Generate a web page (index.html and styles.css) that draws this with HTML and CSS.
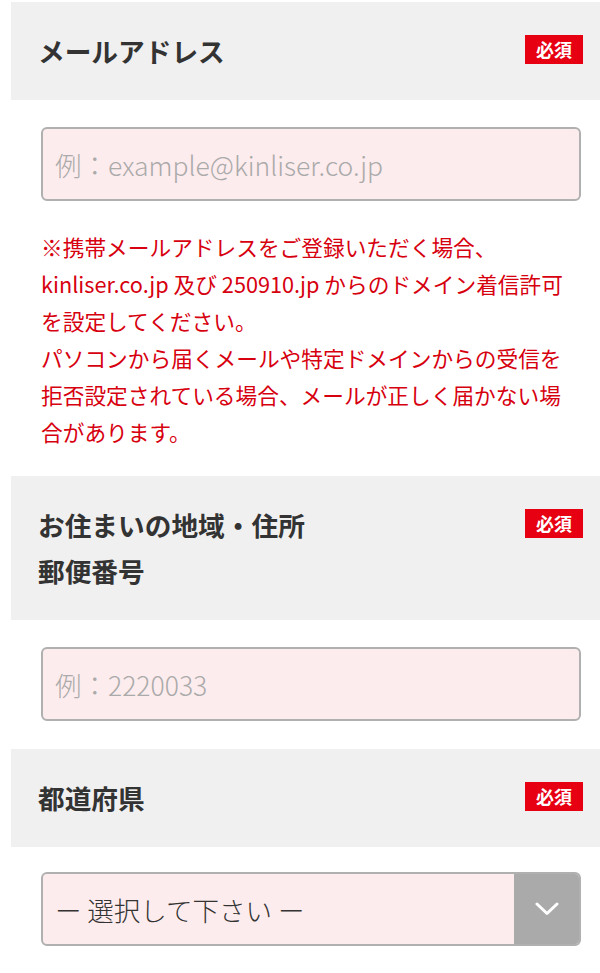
FILE: index.html
```html
<!DOCTYPE html>
<html lang="ja">
<head>
<meta charset="utf-8">
<title>フォーム</title>
<link rel="stylesheet" href="styles.css">
</head>
<body>
<div class="form">
  <div class="sec-head">
    <div class="sec-title">メールアドレス</div>
    <span class="badge">必須</span>
  </div>
  <div class="sec-body">
    <input class="text-input" type="text" placeholder="例：example@kinliser.co.jp">
    <p class="note">※携帯メールアドレスをご登録いただく場合、<br>kinliser.co.jp 及び 250910.jp からのドメイン着信許可を設定してください。<br>パソコンから届くメールや特定ドメインからの受信を拒否設定されている場合、メールが正しく届かない場合があります。</p>
  </div>

  <div class="sec-head">
    <div class="sec-title">お住まいの地域・住所<br>郵便番号</div>
    <span class="badge">必須</span>
  </div>
  <div class="sec-body">
    <input class="text-input" type="text" placeholder="例：2220033">
  </div>

  <div class="sec-head">
    <div class="sec-title">都道府県</div>
    <span class="badge">必須</span>
  </div>
  <div class="sec-body">
    <div class="select-wrap">
      <div class="select-value">ー 選択して下さい ー</div>
      <div class="select-arrow">
        <svg width="24" height="14" viewBox="0 0 24 14"><polyline points="2,2 12,11.5 22,2" fill="none" stroke="#fff" stroke-width="3" stroke-linecap="round" stroke-linejoin="round"/></svg>
      </div>
    </div>
  </div>
</div>
</body>
</html>
```

FILE: styles.css
```css
* { box-sizing: border-box; }
html, body {
  margin: 0;
  padding: 0;
  background: #fff;
}
body {
  font-family: "Noto Sans CJK JP", "Noto Sans", sans-serif;
  color: #333;
}
.form {
  padding: 2px 0 0 11px;
}
.sec-head {
  display: flex;
  justify-content: space-between;
  align-items: flex-start;
  background: #f0f0f0;
  padding: 26px 17px 26px 27px;
}
.sec-title {
  font-size: 26.7px;
  font-weight: 700;
  line-height: 46px;
  color: #333;
}
.badge {
  margin-top: 7px;
  background: #e60012;
  color: #fff;
  font-size: 18px;
  font-weight: 700;
  line-height: 29px;
  height: 29px;
  padding: 0 11px;
}
.sec-body {
  padding: 27px 19px 28px 30px;
}
.text-input {
  display: block;
  width: 100%;
  height: 74px;
  border: 2px solid #b0b0b0;
  border-radius: 6px;
  background: #fdeced;
  font-family: "Noto Sans CJK JP", sans-serif;
  font-size: 26.5px;
  font-weight: 300;
  color: #333;
  padding: 0 12px;
  outline: none;
}
.text-input::placeholder {
  color: #aaa;
}
.note {
  margin: 27px 0 -2px;
  color: #d7000f;
  font-size: 21.7px;
  line-height: 37px;
}
.select-wrap {
  display: flex;
  height: 74px;
  margin-top: -2px;
  border: 2px solid #b0b0b0;
  border-radius: 6px;
  overflow: hidden;
  background: #fdeced;
}
.select-value {
  flex: 1;
  display: flex;
  align-items: center;
  padding: 0 12px;
  font-size: 26.5px;
  font-weight: 300;
  color: #333;
}
.select-arrow {
  width: 65px;
  background: #aaa;
  display: flex;
  align-items: center;
  justify-content: center;
}
```
